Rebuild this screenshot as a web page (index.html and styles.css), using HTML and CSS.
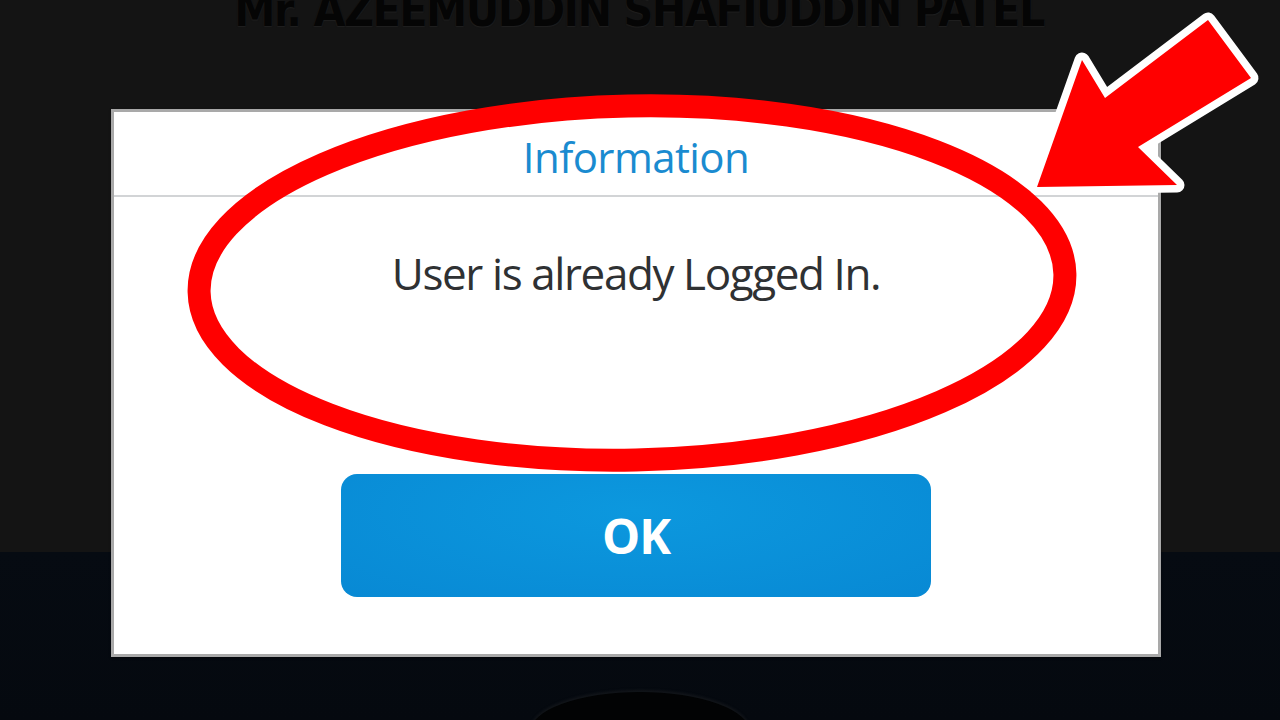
FILE: index.html
```html
<!DOCTYPE html>
<html lang="en">
<head>
<meta charset="utf-8">
<title>Information</title>
<link rel="stylesheet" href="styles.css">
</head>
<body>
<main class="screen">
  <section class="band band-top">
    <h1 class="holder-name">Mr. AZEEMUDDIN SHAFIUDDIN PATEL</h1>
  </section>
  <section class="band band-bottom">
    <div class="dots"></div>
    <div class="device-shape"></div>
  </section>

  <div class="dialog" role="dialog" aria-labelledby="dlg-title">
    <header class="dialog-head">
      <h2 id="dlg-title" class="dialog-title">Information</h2>
    </header>
    <div class="dialog-body">
      <p class="dialog-message">User is already Logged In.</p>
      <button class="btn-ok" type="button">OK</button>
    </div>
  </div>

  <svg class="markup" width="1280" height="720" viewBox="0 0 1280 720" aria-hidden="true">
    <ellipse cx="632" cy="283" rx="433" ry="177" fill="none" stroke="#ff0000" stroke-width="23" transform="rotate(-1.2 632 283)"/>
    <polygon points="1037,187 1082,60 1105,98 1208,20 1251,78 1138,147 1177,185"
             fill="#ff0000" stroke="#ffffff" stroke-width="15" stroke-linejoin="round" paint-order="stroke"/>
  </svg>
</main>
</body>
</html>
```

FILE: styles.css
```css
* { box-sizing: border-box; }

html, body {
  margin: 0;
  padding: 0;
  background: #0a0d12;
}

.screen {
  position: relative;
  width: 1280px;
  height: 720px;
  overflow: hidden;
  display: flex;
  flex-direction: column;
  font-family: "Open Sans", "Noto Sans", sans-serif;
}

.band-top {
  height: 552px;
  background: #141414;
  display: flex;
  justify-content: center;
}

.holder-name {
  margin: -14px 0 0 0;
  font-family: "DejaVu Sans Condensed", "DejaVu Sans", sans-serif;
  font-stretch: condensed;
  font-weight: bold;
  font-size: 46px;
  line-height: 48px;
  letter-spacing: -1.5px;
  color: #050505;
  text-shadow: 0 1px 1px rgba(40, 40, 40, 0.6);
  transform: translateX(-1px);
}

.band-bottom {
  position: relative;
  flex: 1;
  background: linear-gradient(180deg, #060b12 0%, #05090f 100%);
}

.device-shape {
  position: absolute;
  left: 530px;
  top: 140px;
  width: 220px;
  height: 80px;
  border-radius: 50%;
  background: #020304;
  box-shadow: 0 -2px 3px rgba(60, 60, 60, 0.25);
}

.dots {
  position: absolute;
  left: 345px;
  top: 30px;
  width: 50px;
  height: 12px;
  background-image: radial-gradient(circle, rgba(120, 90, 40, 0.35) 1px, transparent 1.5px);
  background-size: 10px 6px;
}

/* modal dialog laid over the screen */
.dialog {
  position: absolute;
  left: 111px;
  top: 109px;
  width: 1050px;
  height: 548px;
  background: #ffffff;
  border: 3px solid #a9a9a9;
  box-shadow: 0 1px 2px rgba(0, 0, 0, 0.5);
  display: flex;
  flex-direction: column;
}

.dialog-head {
  height: 85px;
  border-bottom: 2px solid #d2d4d6;
  display: flex;
  align-items: center;
  justify-content: center;
}

.dialog-title {
  margin: 6px 0 0 0;
  font-weight: 500;
  font-size: 42px;
  letter-spacing: -0.6px;
  color: #1a8bd0;
}

.dialog-body {
  flex: 1;
  display: flex;
  flex-direction: column;
  align-items: center;
}

.dialog-message {
  margin: 52px 0 0 0;
  font-weight: 500;
  font-size: 44px;
  line-height: 48px;
  letter-spacing: -1.4px;
  color: #2f3133;
}

.btn-ok {
  margin-top: 177px;
  width: 590px;
  height: 123px;
  border: none;
  border-radius: 16px;
  background: radial-gradient(ellipse at 50% 30%, #0c98de 0%, #0889d4 100%);
  color: #ffffff;
  font-family: "Open Sans", "Noto Sans", sans-serif;
  font-weight: 700;
  font-size: 48px;
  letter-spacing: -1px;
  padding: 0;
}

/* red annotation layer */
.markup {
  position: absolute;
  left: 0;
  top: 0;
  pointer-events: none;
}
```
